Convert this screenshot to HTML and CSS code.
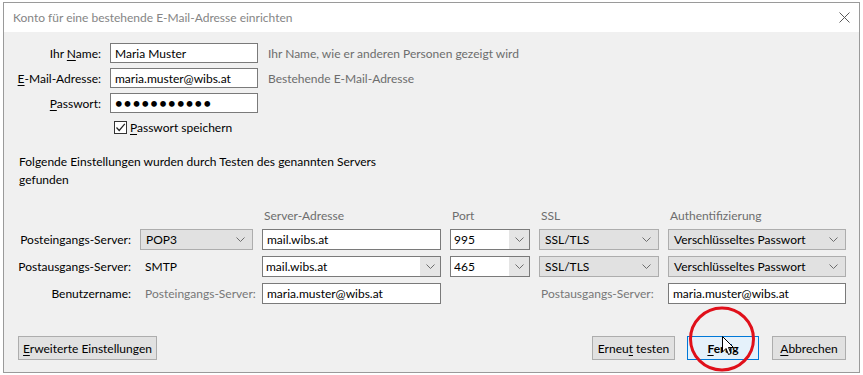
FILE: index.html
```html
<!DOCTYPE html>
<html lang="de">
<head>
  <meta charset="UTF-8" />
  <title>Konto einrichten</title>
  <link rel="stylesheet" href="styles.css">
</head>
<body>
  <div class="window">
    <div class="titlebar">
      <span class="title">Konto für eine bestehende E-Mail-Adresse einrichten</span>
      <svg class="close" width="11" height="11" viewBox="0 0 11 11"><path d="M0.5 0.5 L10.5 10.5 M10.5 0.5 L0.5 10.5" stroke="#5a5a5a" stroke-width="1" fill="none"/></svg>
    </div>
    <div class="content">
      <!-- Identity -->
      <div class="identity">
        <label>Ihr <u>N</u>ame:</label>
        <input type="text" value="Maria Muster" />
        <span class="hint">Ihr Name, wie er anderen Personen gezeigt wird</span>

        <label><u>E</u>-Mail-Adresse:</label>
        <input type="text" value="maria.muster@wibs.at" />
        <span class="hint">Bestehende E-Mail-Adresse</span>

        <label><u>P</u>asswort:</label>
        <input type="password" class="pw" value="geheimeswor" />
        <span class="hint"></span>

        <span></span>
        <div class="check">
          <span class="box"><svg width="11" height="11" viewBox="0 0 11 11"><path d="M1.5 5.5 L4.2 8.5 L9.8 1.8" stroke="#222" stroke-width="1.2" fill="none"/></svg></span>
          <span><u>P</u>asswort speichern</span>
        </div>
        <span></span>
      </div>

      <p class="found">Folgende Einstellungen wurden durch Testen des genannten Servers gefunden</p>

      <!-- Server settings -->
      <div class="servers">
        <span></span>
        <span></span>
        <span class="head">Server-Adresse</span>
        <span class="head">Port</span>
        <span class="head">SSL</span>
        <span class="head">Authentifizierung</span>

        <label>Posteingangs-Server:</label>
        <div class="select"><span>POP3</span><svg class="chev" width="9" height="5" viewBox="0 0 9 5"><path d="M0.5 0.5 L4.5 4.5 L8.5 0.5" stroke="#6d6d6d" fill="none"/></svg></div>
        <input type="text" value="mail.wibs.at" />
        <div class="combo"><input type="text" value="995" /><span class="drop"><svg class="chev" width="9" height="5" viewBox="0 0 9 5"><path d="M0.5 0.5 L4.5 4.5 L8.5 0.5" stroke="#6d6d6d" fill="none"/></svg></span></div>
        <div class="select"><span>SSL/TLS</span><svg class="chev" width="9" height="5" viewBox="0 0 9 5"><path d="M0.5 0.5 L4.5 4.5 L8.5 0.5" stroke="#6d6d6d" fill="none"/></svg></div>
        <div class="select"><span>Verschlüsseltes Passwort</span><svg class="chev" width="9" height="5" viewBox="0 0 9 5"><path d="M0.5 0.5 L4.5 4.5 L8.5 0.5" stroke="#6d6d6d" fill="none"/></svg></div>

        <label>Postausgangs-Server:</label>
        <span class="plain">SMTP</span>
        <div class="combo"><input type="text" value="mail.wibs.at" /><span class="drop"><svg class="chev" width="9" height="5" viewBox="0 0 9 5"><path d="M0.5 0.5 L4.5 4.5 L8.5 0.5" stroke="#6d6d6d" fill="none"/></svg></span></div>
        <div class="combo"><input type="text" value="465" /><span class="drop"><svg class="chev" width="9" height="5" viewBox="0 0 9 5"><path d="M0.5 0.5 L4.5 4.5 L8.5 0.5" stroke="#6d6d6d" fill="none"/></svg></span></div>
        <div class="select"><span>SSL/TLS</span><svg class="chev" width="9" height="5" viewBox="0 0 9 5"><path d="M0.5 0.5 L4.5 4.5 L8.5 0.5" stroke="#6d6d6d" fill="none"/></svg></div>
        <div class="select"><span>Verschlüsseltes Passwort</span><svg class="chev" width="9" height="5" viewBox="0 0 9 5"><path d="M0.5 0.5 L4.5 4.5 L8.5 0.5" stroke="#6d6d6d" fill="none"/></svg></div>

        <label>Benutzername:</label>
        <span class="plain muted">Posteingangs-Server:</span>
        <input type="text" value="maria.muster@wibs.at" />
        <span></span>
        <span class="plain muted out">Postausgangs-Server:</span>
        <input type="text" value="maria.muster@wibs.at" />
      </div>

      <!-- Buttons -->
      <div class="actions">
        <button class="btn wide"><u>E</u>rweiterte Einstellungen</button>
        <span class="spacer"></span>
        <button class="btn retest">Erneu<u>t</u> testen</button>
        <button class="btn default"><u>F</u>ertig</button>
        <button class="btn cancel"><u>A</u>bbrechen</button>
      </div>
    </div>
  </div>

  <!-- annotation over the Fertig button -->
  <svg class="marker" width="80" height="80" viewBox="0 0 80 80">
    <ellipse cx="40" cy="40" rx="31.5" ry="31" stroke="#e0101a" stroke-width="3" fill="none"/>
    <path d="M40.5 37.5 L40.5 53 L44 49.5 L46.5 55.5 L49 54.5 L46.5 48.5 L51.5 48.5 Z" fill="#fff" stroke="#000" stroke-width="1" stroke-linejoin="round"/>
  </svg>
</body>
</html>
```

FILE: styles.css
```css
body { margin: 0; background: #fff; font-family: Lato, "Noto Sans", sans-serif; font-size: 12px; color: #000; }
u { text-decoration: underline; text-underline-offset: 2px; }
label, .plain, .head, .hint, .btn { white-space: nowrap; }

.window { margin: 2px 0 0 3px; width: 855px; height: 369px; border: 1px solid #9a9a9a; background: #f0f0f0; position: relative; }
.titlebar { height: 29px; background: #fff; display: flex; align-items: center; justify-content: space-between; padding: 0 9px 0 9px; }
.title { color: #858585; font-size: 12px; }

.content { padding-top: 11px; }

/* identity block */
.identity { display: grid; grid-template-columns: 97px 148px auto; column-gap: 9px; row-gap: 5px; grid-auto-rows: 20px; align-items: center; }
.identity label { text-align: right; }
.identity .hint { color: #6d6d6d; margin-left: 1px; }
.identity .check { display: flex; align-items: center; gap: 3px; margin-left: 4px; margin-top: -1px; }
.check .box { width: 11px; height: 11px; border: 1px solid #333; background: #fff; display: flex; }

input { font-family: inherit; font-size: 12px; height: 20px; box-sizing: border-box; border: 1px solid #7a7a7a; background: #fff; padding: 0 4px; margin: 0; outline: none; color: #000; }
input.pw { letter-spacing: 1.3px; font-size: 13px; font-weight: bold; }

.found { margin: 15px 0 0 15px; line-height: 18px; width: 370px; }

/* server table */
.servers { display: grid; grid-template-columns: 122px 113px 179px 80px 120px 178px; column-gap: 9px; row-gap: 6px; grid-template-rows: 16px 21px 21px 21px; align-items: center; margin: 18px 0 0 5px; }
.servers label { text-align: right; }
.servers .head { color: #6d6d6d; padding-left: 2px; }
.servers input { height: 21px; }
.plain { padding-left: 5px; }
.muted { color: #777; }
.out { padding-left: 2px; }

.select { height: 21px; box-sizing: border-box; border: 1px solid #adadad; background: #e1e1e1; display: flex; align-items: center; justify-content: space-between; padding: 0 7px 0 5px; }
.combo { height: 21px; box-sizing: border-box; border: 1px solid #7a7a7a; background: #fff; display: flex; }
.combo input { border: none; height: 19px; flex: 1; min-width: 0; padding-left: 3px; }
.combo .drop { width: 20px; background: #e5e5e5; display: flex; align-items: center; justify-content: center; }
.chev { display: block; }

/* bottom buttons */
.actions { display: flex; align-items: center; gap: 12px; margin: 32px 13px 0 14px; }
.spacer { flex: 1; }
.btn { font-family: inherit; font-size: 12px; height: 24px; box-sizing: border-box; border: 1px solid #adadad; background: #e1e1e1; color: #000; padding: 0 4px; margin: 0; }
.wide { width: 139px; }
.retest { width: 83px; }
.default { width: 72px; border-color: #0078d7; background: #e5f1fb; font-weight: bold; }
.cancel { width: 74px; margin-left: 1px; }

.marker { position: absolute; left: 682px; top: 299px; }
```
